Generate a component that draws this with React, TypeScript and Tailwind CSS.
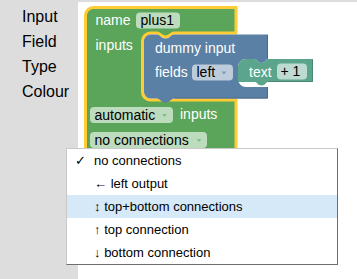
const menuItems = [
  { icon: '', label: 'no connections', checked: true },
  { icon: '←', label: 'left output' },
  { icon: '↕', label: 'top+bottom connections', active: true },
  { icon: '↑', label: 'top connection' },
  { icon: '↓', label: 'bottom connection' },
]

const Field = ({ x, y, w, text, tx, arrow, bg, arrowColor }: { x: number; y: number; w: number; text: string; tx: number; arrow?: number; bg: string; arrowColor?: string }) => (
  <g>
    <rect x={x} y={y} width={w} height={16} rx={4} fill={bg} />
    <text x={tx} y={y + 12.5} fill="#000" fontSize={14}>
      {text}
    </text>
    {arrow !== undefined && <polygon points={`${arrow},${y + 7} ${arrow + 5},${y + 7} ${arrow + 2.5},${y + 10}`} fill={arrowColor} />}
  </g>
)

const Workspace = () => (
  <svg width="279" height="277" viewBox="78 2 279 277" fontFamily="'Liberation Sans', Arial, sans-serif">
    {/* factory_base block, selected */}
    <path
      d="M 85.5 15.5 A 8 8 0 0 1 93.5 7.5 H 236 V 33 H 174 C 171 33 170 37 165.5 37 C 161 37 160 33 157 33 H 150.5 A 8 8 0 0 0 142.5 41 V 92 A 8 8 0 0 0 150.5 100 H 236 V 158 H 93.5 A 8 8 0 0 1 85.5 150 Z"
      fill="#5ba55b"
      stroke="#ffcc33"
      strokeWidth={3}
    />
    <text x={95.5} y={25} fill="#fff" fontSize={14}>name</text>
    <Field x={136} y={12.5} w={44} text="plus1" tx={140.5} bg="#bddbbd" />
    <text x={95.5} y={50} fill="#fff" fontSize={14}>inputs</text>

    {/* input_dummy block */}
    <path
      d="M 144 41 A 6.5 6.5 0 0 1 150.5 34.5 H 157 C 160 34.5 161 38.5 165.5 38.5 C 170 38.5 171 34.5 174 34.5 H 268 V 59 C 266 59 265.5 63 261.5 63 C 257.5 63 257 59 255 59 H 246 A 8 8 0 0 0 238 67 V 79 A 8 8 0 0 0 246 87 H 268 V 98.5 H 174 C 171 98.5 170 102.5 165.5 102.5 C 161 102.5 160 98.5 157 98.5 H 150.5 A 6.5 6.5 0 0 1 144 92 Z"
      fill="#5b80a5"
    />
    <path d="M 267.5 35 V 59 M 267.5 87 V 98 H 174" fill="none" stroke="#4a6a8a" strokeWidth={1} />
    <text x={155} y={53} fill="#fff" fontSize={14}>dummy input</text>
    <text x={155} y={76.5} fill="#fff" fontSize={14}>fields</text>
    <Field x={192} y={64.5} w={41} text="left" tx={196.5} arrow={221.5} bg="#bdccdb" arrowColor="#7f9bb8" />

    {/* field_static block */}
    <path
      d="M 238 67 A 8 8 0 0 1 246 59 H 255 C 257 59 257.5 63 261.5 63 C 265.5 63 266 59 268 59 H 313 V 82 H 268 C 266 82 265.5 85.5 261.5 85.5 C 257.5 85.5 257 82 255 82 H 238 Z"
      fill="#5ba58c"
    />
    <path d="M 312.5 59.5 V 81.5 H 268" fill="none" stroke="#4a8a74" strokeWidth={1} />
    <text x={249} y={76.5} fill="#fff" fontSize={14}>text</text>
    <Field x={277} y={63.5} w={30} text="+ 1" tx={280.5} bg="#bddbd1" />

    <Field x={90} y={107} w={83} text="automatic" tx={94.5} arrow={162} bg="#bddbbd" arrowColor="#86bf86" />
    <text x={180} y={119} fill="#fff" fontSize={14}>inputs</text>
    <Field x={90} y={132} w={117} text="no connections" tx={94.5} arrow={196.5} bg="#bddbbd" arrowColor="#86bf86" />
  </svg>
)

const ConnectionsMenu = () => (
  <div className="absolute left-[66px] top-[148px] w-[272px] border border-t-[#c8c8c8] border-l-[#c8c8c8] border-r-[#6e6e6e] border-b-[#6e6e6e] bg-white text-[13px] text-black">
    {menuItems.map((item) => (
      <div key={item.label} className={`flex h-[23px] items-start pt-[1px] leading-[22px] ${item.active ? 'bg-[#d6e9f8]' : ''}`}>
        <span className="w-[27px] shrink-0 pl-[8px] font-['DejaVu_Sans',sans-serif] text-[13px]">{item.checked ? '✓' : ''}</span>
        <span className="whitespace-pre">
          {item.icon ? `${item.icon} ` : ''}
          {item.label}
        </span>
      </div>
    ))}
  </div>
)

export default function App() {
  return (
    <div className="relative flex h-[279px] w-[357px] overflow-hidden bg-[#dddddd] font-['Liberation_Sans',Arial,sans-serif]">
      <div className="w-[78px] shrink-0 pl-[22px] pt-[4px] text-[16px] leading-[25px] text-black">
        <div>Input</div>
        <div>Field</div>
        <div>Type</div>
        <div>Colour</div>
      </div>
      <div className="mt-[2px] flex-1 bg-white">
        <Workspace />
      </div>
      <ConnectionsMenu />
    </div>
  )
}
